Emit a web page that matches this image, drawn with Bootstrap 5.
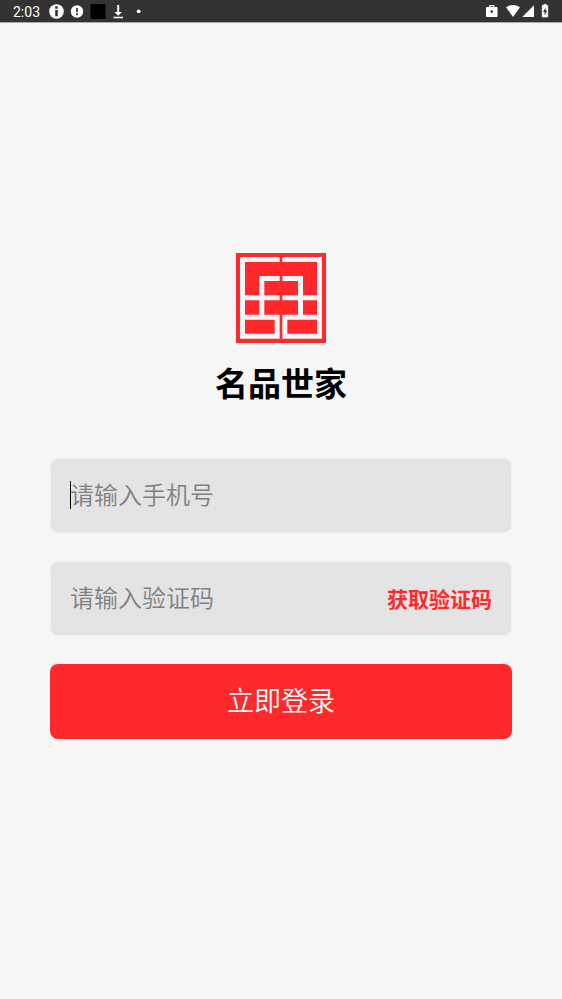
<!DOCTYPE html>
<html lang="zh-CN">
<head>
<meta charset="utf-8">
<meta name="viewport" content="width=device-width, initial-scale=1">
<title>名品世家</title>
<link href="https://cdn.jsdelivr.net/npm/bootstrap@5.3.0/dist/css/bootstrap.min.css" rel="stylesheet">
<style>
  body { background: #f6f6f6; font-family: "Noto Sans CJK SC", sans-serif; }
  .status-bar { height: 22px; background: #333; box-shadow: 0 1px 0 #aaa; padding: 0 13px; font: 14px/22px Roboto, sans-serif; }
  .status-bar svg { display: block; }
  .clock { width: 36px; padding-top: 1px; }
  .login-area { padding: 0 50px 29px; }
  .brand-name { font-size: 33px; line-height: 48px; font-weight: 700; margin: 15px 0 52px; }
  .login-form { gap: 28px; }
  .field-box { height: 75px; padding: 0 19px 2px; background: #e4e4e4; border: 1px solid #f0f0f0; border-radius: 8px; }
  .field-box .form-control { font-size: 24px; line-height: 36px; height: 40px; padding: 0 0 2px; font-weight: 350; color: #333; }
  .field-box .form-control:focus { box-shadow: none; }
  .field-box .form-control::placeholder { color: #808080; opacity: 1; }
  .caret { width: 1px; height: 28px; background: #000; margin-right: -1px; }
  .code-btn { font-size: 21px; line-height: 32px; font-weight: 700; color: #ff292c; }
  .code-btn:hover { color: #d91f22; }
  .login-btn { height: 75px; padding: 0 0 4px; border-radius: 8px; font-size: 27px; line-height: 40px; font-weight: 350; background: #ff292c; color: #fff; }
  .login-btn:hover { background: #e92427; color: #fff; }
</style>
</head>
<body class="min-vh-100 d-flex flex-column">
<header class="status-bar d-flex align-items-center justify-content-between text-white">
  <div class="d-flex align-items-center">
    <span class="clock">2:03</span>
    <svg width="96" height="22" viewBox="0 0 96 22" aria-hidden="true">
      <circle cx="7.500" cy="11.500" r="7.300" fill="#fff"/>
      <path d="M6.200 6.300h2.600v2.400H6.200zM6.200 10h2.600v6.300H6.200z" fill="#333"/>
      <circle cx="28" cy="11.500" r="6.200" fill="#fff"/>
      <path d="M27 8h2v4.300h-2zM27 13.300h2v2h-2z" fill="#555"/>
      <path d="M41.500 4h15v15h-15z" fill="#000"/>
      <path d="M68.200 5h2v7H73l-3.800 3.800L65.400 12h2.800zM64.500 16.700h9.500v1.500h-9.500z" fill="#fff"/>
      <circle cx="89.700" cy="11.300" r="1.900" fill="#fff"/>
    </svg>
  </div>
  <svg width="64" height="22" viewBox="0 0 64 22" aria-hidden="true">
    <path fill="#fff" fill-rule="evenodd" d="M2 7h2V6q0-1 1-1h3.500q1 0 1 1v1h2q1 0 1 1v8q0 1-1 1H2q-1 0-1-1V8q0-1 1-1zm3.300 0h3V6.300h-3zM6.700 10.300a1.300 1.300 0 1 0 0 2.600 1.300 1.300 0 0 0 0-2.600z"/>
    <path d="M21 7.200q7-4.400 14 0L28 17z" fill="#fff"/>
    <path d="M49 5.200V17H37.200z" fill="#fff"/>
    <path d="M57.200 5.500h1.600V4.300h2.400v1.200h1.600V17h-5.600z" fill="#fff" stroke="#fff" stroke-width=".6" stroke-linejoin="round"/>
    <path d="M60.600 7.500v3h1.500l-2.500 5v-3.600h-1.500z" fill="#333"/>
  </svg>
</header>

<main class="login-area flex-grow-1 d-flex flex-column justify-content-center">
  <svg class="d-block mx-auto" width="90" height="90" viewBox="0 0 270 270" role="img" aria-label="名品世家">
    <path d="M0 0h270v270H0z" fill="#ff292c"/>
    <path fill="none" stroke="#f6f6f6" stroke-width="15" d="M131 19.500H19.500V249.500H123.500V192.500H19.500M19.500 134.500H131M77.500 192.500V76.500H131M139 19.500H250.500V249.500H146.500V192.500H250.500M250.500 134.500H139M193.500 192.500V76.500H139"/>
  </svg>
  <h1 class="brand-name text-center text-black">名品世家</h1>
  <form class="login-form d-flex flex-column">
    <div class="field-box d-flex align-items-center">
      <span class="caret" aria-hidden="true"></span>
      <input type="tel" class="form-control flex-grow-1 border-0 bg-transparent rounded-0" placeholder="请输入手机号" aria-label="手机号">
    </div>
    <div class="field-box d-flex align-items-center">
      <input type="text" inputmode="numeric" class="form-control flex-grow-1 border-0 bg-transparent rounded-0" placeholder="请输入验证码" aria-label="验证码">
      <button type="button" class="code-btn btn border-0 p-0 flex-shrink-0">获取验证码</button>
    </div>
    <button type="submit" class="login-btn btn border-0 w-100">立即登录</button>
  </form>
</main>
<script src="https://cdn.jsdelivr.net/npm/bootstrap@5.3.0/dist/js/bootstrap.bundle.min.js"></script>
</body>
</html>
